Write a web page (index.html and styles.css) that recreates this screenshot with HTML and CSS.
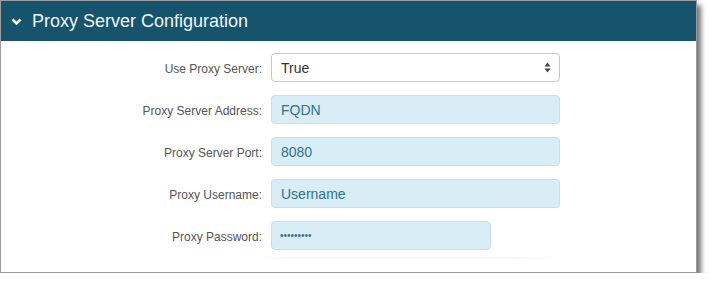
FILE: index.html
```html
<!DOCTYPE html>
<html lang="en">
<head>
    <meta charset="UTF-8">
    <title>Proxy Server Configuration</title>
    <link rel="stylesheet" href="styles.css">
</head>
<body>
    <div class="panel">
        <div class="panel-header">
            <svg class="chevron" width="11" height="8" viewBox="0 0 11 8">
                <path d="M1.5 1.5 L5.5 5.5 L9.5 1.5" fill="none" stroke="#ffffff" stroke-width="2.6"/>
            </svg>
            <span class="panel-title">Proxy Server Configuration</span>
        </div>

        <div class="form">
            <div class="form-row">
                <label class="form-label">Use Proxy Server:</label>
                <div class="select-box">
                    <span>True</span>
                    <svg class="select-arrows" width="7" height="11" viewBox="0 0 7 11">
                        <path d="M3.5 0.5 L6.5 4.5 L0.5 4.5 Z" fill="#444"/>
                        <path d="M3.5 10.5 L6.5 6.5 L0.5 6.5 Z" fill="#444"/>
                    </svg>
                </div>
            </div>
            <div class="form-row">
                <label class="form-label">Proxy Server Address:</label>
                <input class="field" type="text" value="FQDN">
            </div>
            <div class="form-row">
                <label class="form-label">Proxy Server Port:</label>
                <input class="field" type="text" value="8080">
            </div>
            <div class="form-row">
                <label class="form-label">Proxy Username:</label>
                <input class="field" type="text" value="Username">
            </div>
            <div class="form-row">
                <label class="form-label">Proxy Password:</label>
                <input class="field field-short" type="password" value="password1">
            </div>
            <div class="form-footer"></div>
        </div>
    </div>
</body>
</html>
```

FILE: styles.css
```css
* {
    margin: 0;
    padding: 0;
    box-sizing: border-box;
    font-family: "Liberation Sans", Arial, sans-serif;
}

body {
    background-color: #ffffff;
}

.panel {
    width: 697px;
    height: 273px;
    border: 1px solid #9c9c9c;
    background-color: #ffffff;
    box-shadow: 4px 5px 5px rgba(0, 0, 0, 0.55);
}

.panel-header {
    height: 40px;
    background-color: #16536d;
    display: flex;
    align-items: center;
    padding-left: 10px;
}

.chevron {
    margin-right: 10px;
    margin-top: 1px;
}

.panel-title {
    color: #f2f6f8;
    font-size: 18px;
}

.form {
    padding-top: 12px;
    display: flex;
    flex-direction: column;
    gap: 13px;
}

.form-row {
    display: flex;
    align-items: center;
    height: 29px;
}

.form-label {
    width: 261px;
    text-align: right;
    font-size: 12px;
    color: #555555;
    margin-right: 9px;
    padding-top: 3px;
}

.select-box {
    width: 289px;
    height: 29px;
    border: 1px solid #c8c8c8;
    border-radius: 4px;
    background-color: #ffffff;
    display: flex;
    align-items: center;
    justify-content: space-between;
    padding: 0 8px 0 9px;
    font-size: 14px;
    color: #333333;
}

.field {
    width: 289px;
    height: 29px;
    border: 1px solid #bde3ee;
    border-radius: 4px;
    background-color: #d9edf7;
    padding: 0 9px;
    font-size: 14px;
    color: #31708f;
    outline: none;
}

.field-short {
    width: 220px;
    padding-left: 8px;
    font-size: 10px;
}

.form-footer {
    margin: -6px 0 0 255px;
    width: 300px;
    height: 2px;
    background: linear-gradient(to right, rgba(0,0,0,0), rgba(0,0,0,0.04) 15%, rgba(0,0,0,0.04) 85%, rgba(0,0,0,0));
}
```
